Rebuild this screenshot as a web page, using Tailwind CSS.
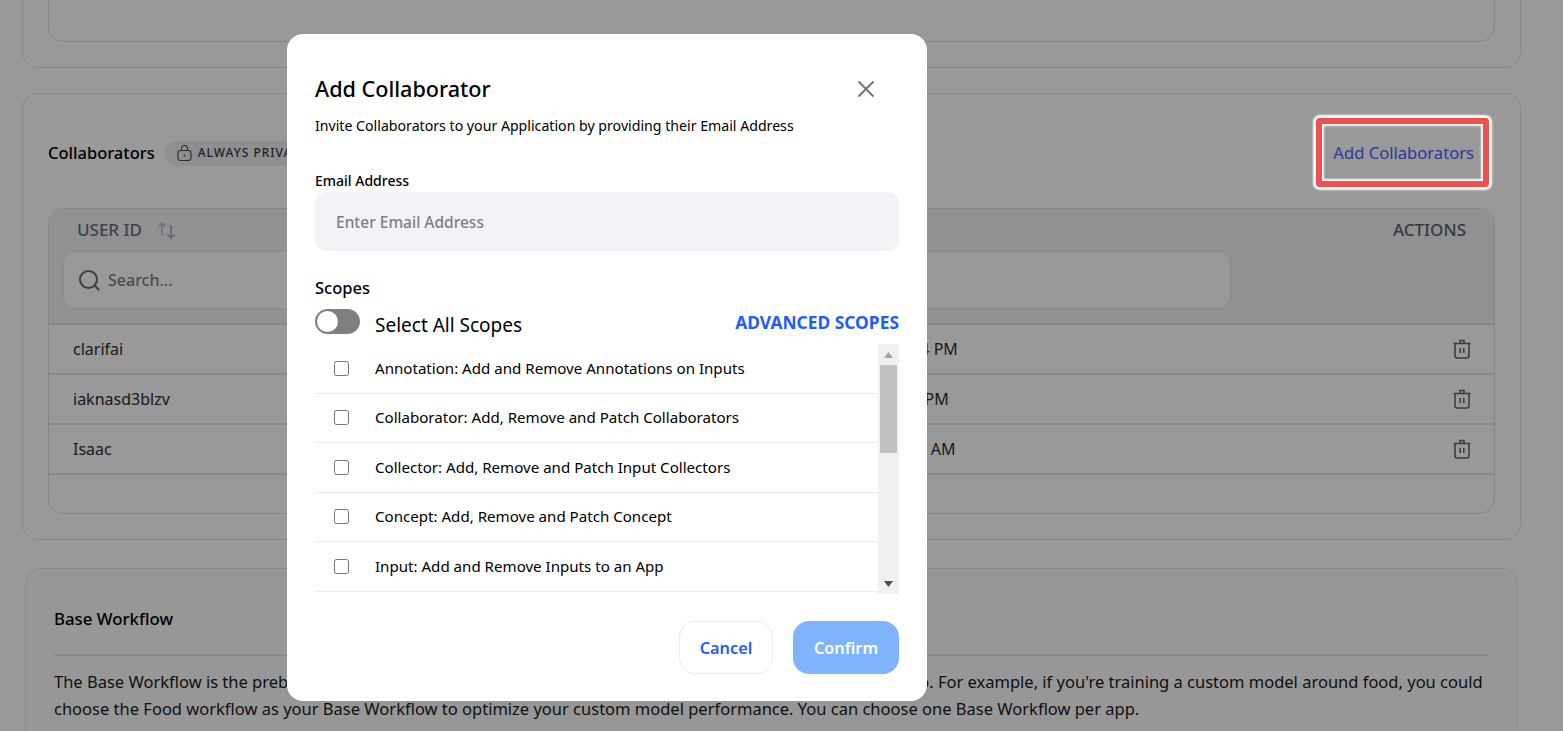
<!DOCTYPE html>
<html lang="en">
<head>
    <meta charset="UTF-8">
    <title>Add Collaborator</title>
    <script src="https://cdn.jsdelivr.net/npm/@tailwindcss/browser@4"></script>
</head>
<body class="bg-white text-black font-['Noto_Sans',sans-serif]">
<div class="relative w-[1563px] h-[731px] overflow-hidden">

    <!-- page behind the modal -->
    <div class="ml-[22px] w-[1499px] mt-[-59px] h-[127px] rounded-[16px] border border-[#e5e5e8] px-[25px]">
        <div class="mt-[-1px] h-[101px] rounded-[16px] border border-[#e0e0e4]"></div>
    </div>

    <section class="ml-[22px] w-[1499px] mt-[25px] h-[447px] rounded-[16px] border border-[#e5e5e8] px-[25px]">
        <div class="mt-[40px] mb-[36px] h-[38px] flex items-center">
            <h2 class="text-[16.500px] font-medium">Collaborators</h2>
            <span class="ml-[10px] h-[25px] w-[200px] rounded-full bg-[#eeeef2] flex items-center pl-[12px] gap-[6px]">
                <svg width="15" height="16" viewBox="0 0 15 16" fill="none" stroke="#55555c" stroke-width="1.200"><rect x="1" y="5.500" width="13" height="10" rx="2.500"/><path d="M4.500 5.500V3.500a3 3 0 0 1 6 0v2"/><circle cx="7.500" cy="10.500" r="1" fill="#55555c" stroke="none"/></svg>
                <span class="text-[12px] font-medium tracking-[1px] text-[#3a3a40]">ALWAYS PRIVATE</span>
            </span>
            <span class="ml-auto mr-[21px] text-[16.600px] text-[#4861ff]">Add Collaborators</span>
        </div>

        <div class="h-[306px] rounded-[16px] border border-[#e0e0e4] overflow-hidden">
            <div class="h-[116px] bg-[#f2f2f7] border-b-2 border-[#e0e0e4]">
                <div class="flex items-center h-[42px] pl-[28px] pr-[28px] text-[17px] font-medium text-[#667085]">
                    <span>USER ID</span>
                    <svg class="ml-[14px]" width="21" height="20" viewBox="0 0 21 20" fill="none" stroke-width="1.800"><path d="M6 15V3M2.500 6.500 6 3l3.500 3.500" stroke="#c0c3cc"/><path d="M15 5v13M11.500 14.500 15 18l3.500-3.500" stroke="#aab0bc"/></svg>
                    <span class="ml-auto text-[#5a5f6c]">ACTIONS</span>
                </div>
                <div class="ml-[14px] w-[1168px] h-[58px] rounded-[12px] bg-white border border-[#e6e6ea] flex items-center pl-[14px] gap-[7px]">
                    <svg width="23" height="23" viewBox="0 0 23 23" fill="none" stroke="#6a6a6a" stroke-width="2"><circle cx="10.500" cy="10.500" r="8.500"/><path d="m16.800 16.800 4.500 4.500"/></svg>
                    <span class="text-[16px] font-medium text-[#808080]">Search...</span>
                </div>
            </div>
            <div class="flex items-center h-[50px] border-b-2 border-[#e6e6ea] pl-[24px] pr-[23px] text-[16px] text-[#2c2c2c]">
                <span class="w-[723px]">clarifai</span><span>Mar 14, 2024 3:44 PM</span>
                <svg class="ml-auto" width="18" height="20" viewBox="0 0 18 20" fill="none" stroke="#666" stroke-width="1.600"><path d="M.5 4.500h17M7 4V1.500h4V4M2 4.500v12.500A2.200 2.200 0 0 0 4.200 19h9.600a2.200 2.200 0 0 0 2.200-2.200V4.500M7.200 9v5M10.800 9v5"/></svg>
            </div>
            <div class="flex items-center h-[50px] border-b-2 border-[#e6e6ea] pl-[24px] pr-[23px] text-[16px] text-[#2c2c2c]">
                <span class="w-[723px]">iaknasd3blzv</span><span>Mar 8, 2024 1:04 PM</span>
                <svg class="ml-auto" width="18" height="20" viewBox="0 0 18 20" fill="none" stroke="#666" stroke-width="1.600"><path d="M.5 4.500h17M7 4V1.500h4V4M2 4.500v12.500A2.200 2.200 0 0 0 4.200 19h9.600a2.200 2.200 0 0 0 2.200-2.200V4.500M7.200 9v5M10.800 9v5"/></svg>
            </div>
            <div class="flex items-center h-[50px] border-b-2 border-[#e6e6ea] pl-[24px] pr-[23px] text-[16px] text-[#2c2c2c]">
                <span class="w-[723px]">Isaac</span><span>Feb 2, 2024 10:18 AM</span>
                <svg class="ml-auto" width="18" height="20" viewBox="0 0 18 20" fill="none" stroke="#666" stroke-width="1.600"><path d="M.5 4.500h17M7 4V1.500h4V4M2 4.500v12.500A2.200 2.200 0 0 0 4.200 19h9.600a2.200 2.200 0 0 0 2.200-2.200V4.500M7.200 9v5M10.800 9v5"/></svg>
            </div>
        </div>
    </section>

    <section class="ml-[25px] w-[1493px] mt-[28px] h-[300px] rounded-[16px] border border-[#e5e5e8] bg-[#fcfcfc] pl-[28px] pr-[28px] pt-[38px]">
        <h2 class="text-[16.800px] leading-[24px] font-medium">Base Workflow</h2>
        <div class="mt-[23px] h-[2px] bg-[#e6e6e8]"></div>
        <p class="mt-[12px] text-[16.500px] leading-[27px] text-[#1a1a1a] whitespace-nowrap">The Base Workflow is the prebuilt workflow that indexes your inputs and gives AI models a head start in your app. For example, if you're training a custom model around food, you could<br>choose the Food workflow as your Base Workflow to optimize your custom model performance. You can choose one Base Workflow per app.</p>
    </section>

    <!-- overlay -->
    <div class="absolute inset-0 bg-black/40"></div>

    <!-- highlight round the add button -->
    <div class="absolute left-[1316px] top-[118px] w-[173px] h-[69px] rounded-[4px] border-[6px] border-[#ef5050] shadow-[0_0_2px_3px_#fff,inset_0_0_2px_2px_#fff]"></div>

    <!-- modal -->
    <div class="absolute left-[287px] top-[34px] w-[640px] h-[667px] rounded-[16px] bg-white px-[28px] pt-[38px]">
        <div class="flex items-center justify-between h-[34px]">
            <h1 class="text-[21.600px] font-medium">Add Collaborator</h1>
            <svg class="mr-[24px]" width="18" height="18" viewBox="0 0 18 18" fill="none" stroke="#757575" stroke-width="2"><path d="m1.500 1.500 15 15M16.500 1.500l-15 15"/></svg>
        </div>
        <p class="mt-[10px] h-[20px] text-[14.150px] leading-[20px]">Invite Collaborators to your Application by providing their Email Address</p>
        <label class="block mt-[35px] h-[20px] text-[14px] leading-[20px] font-medium">Email Address</label>
        <div class="mt-[1px] h-[59px] rounded-[12px] bg-[#f2f2f7] flex items-center pl-[21px] pt-[2px] text-[15.500px] font-medium text-[#808080]">Enter Email Address</div>
        <div class="mt-[27px] h-[20px] text-[16.500px] leading-[20px] font-medium">Scopes</div>
        <div class="mt-[11px] h-[25px] flex items-center">
            <span class="w-[45px] h-[25px] rounded-full bg-[#7f7f7f] p-[2px]"><span class="block w-[21px] h-[21px] rounded-full bg-white"></span></span>
            <span class="ml-[15px] mt-[8px] text-[19px]">Select All Scopes</span>
            <span class="ml-auto mt-[2px] text-[17.400px] font-bold text-[#1f5bff]">ADVANCED SCOPES</span>
        </div>

        <div class="mt-[10px] h-[250px] flex overflow-hidden">
            <div class="flex-1 text-[15.100px]">
                <div class="h-[49.500px] border-b border-[#ececec] flex items-center pl-[19px] gap-[26px]"><input type="checkbox" class="w-[15px] h-[15px]"><span>Annotation: Add and Remove Annotations on Inputs</span></div>
                <div class="h-[49.500px] border-b border-[#ececec] flex items-center pl-[19px] gap-[26px]"><input type="checkbox" class="w-[15px] h-[15px]"><span>Collaborator: Add, Remove and Patch Collaborators</span></div>
                <div class="h-[49.500px] border-b border-[#ececec] flex items-center pl-[19px] gap-[26px]"><input type="checkbox" class="w-[15px] h-[15px]"><span>Collector: Add, Remove and Patch Input Collectors</span></div>
                <div class="h-[49.500px] border-b border-[#ececec] flex items-center pl-[19px] gap-[26px]"><input type="checkbox" class="w-[15px] h-[15px]"><span>Concept: Add, Remove and Patch Concept</span></div>
                <div class="h-[49.500px] border-b border-[#ececec] flex items-center pl-[19px] gap-[26px]"><input type="checkbox" class="w-[15px] h-[15px]"><span>Input: Add and Remove Inputs to an App</span></div>
            </div>
            <!-- scrollbar -->
            <div class="w-[21px] bg-[#f1f1f1] flex flex-col items-center">
                <div class="h-[21px] flex items-center justify-center"><svg width="9" height="6" viewBox="0 0 9 6"><path d="M4.500 0 9 6H0z" fill="#a3a3a3"/></svg></div>
                <div class="w-[17px] h-[88px] bg-[#c1c1c1]"></div>
                <div class="mt-auto h-[21px] flex items-center justify-center"><svg width="9" height="6" viewBox="0 0 9 6"><path d="M0 0h9L4.500 6z" fill="#505050"/></svg></div>
            </div>
        </div>

        <div class="mt-[27px] flex justify-end gap-[20px] text-[16.300px] font-semibold">
            <button class="w-[94px] h-[53px] pt-[1px] rounded-[16px] border border-[#ececf0] bg-white text-[#1f5bff]">Cancel</button>
            <button class="w-[106px] h-[53px] pt-[1px] rounded-[16px] bg-[#80b4ff] text-white">Confirm</button>
        </div>
    </div>
</div>
</body>
</html>
